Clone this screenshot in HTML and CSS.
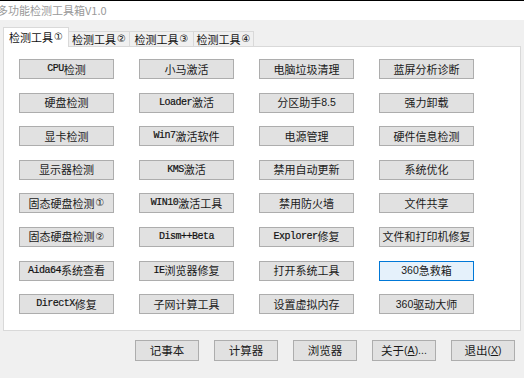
FILE: index.html
```html
<!DOCTYPE html>
<html lang="zh-CN">
<head>
<meta charset="utf-8">
<title>多功能检测工具箱V1.0</title>
<link rel="stylesheet" href="styles.css">
</head>
<body>
<div class="window">
  <div class="titlebar"><span class="title">多功能检测工具箱V1.0</span></div>
  <div class="tabs">
    <div class="tab active">检测工具<span class="c">①</span></div>
    <div class="tab t2">检测工具<span class="c">②</span></div>
    <div class="tab t3">检测工具<span class="c">③</span></div>
    <div class="tab t4">检测工具<span class="c">④</span></div>
  </div>
  <div class="panel">
    <div class="grid">
      <button class="btn"><span class="m">CPU</span>检测</button>
      <button class="btn">小马激活</button>
      <button class="btn">电脑垃圾清理</button>
      <button class="btn">蓝屏分析诊断</button>

      <button class="btn">硬盘检测</button>
      <button class="btn"><span class="m">Loader</span>激活</button>
      <button class="btn">分区助手<span class="s">8.5</span></button>
      <button class="btn">强力卸载</button>

      <button class="btn">显卡检测</button>
      <button class="btn"><span class="m">Win7</span>激活软件</button>
      <button class="btn">电源管理</button>
      <button class="btn">硬件信息检测</button>

      <button class="btn">显示器检测</button>
      <button class="btn"><span class="m">KMS</span>激活</button>
      <button class="btn">禁用自动更新</button>
      <button class="btn">系统优化</button>

      <button class="btn">固态硬盘检测<span class="c">①</span></button>
      <button class="btn"><span class="m">WIN10</span>激活工具</button>
      <button class="btn">禁用防火墙</button>
      <button class="btn">文件共享</button>

      <button class="btn">固态硬盘检测<span class="c">②</span></button>
      <button class="btn"><span class="m">Dism++Beta</span></button>
      <button class="btn"><span class="m">Explorer</span>修复</button>
      <button class="btn">文件和打印机修复</button>

      <button class="btn"><span class="m">Aida64</span>系统查看</button>
      <button class="btn"><span class="m">IE</span>浏览器修复</button>
      <button class="btn">打开系统工具</button>
      <button class="btn focus"><span class="s">360</span>急救箱</button>

      <button class="btn"><span class="m">DirectX</span>修复</button>
      <button class="btn">子网计算工具</button>
      <button class="btn">设置虚拟内存</button>
      <button class="btn"><span class="s">360</span>驱动大师</button>
    </div>
  </div>
  <div class="footer">
    <button class="btn fbtn">记事本</button>
    <button class="btn fbtn">计算器</button>
    <button class="btn fbtn">浏览器</button>
    <button class="btn fbtn">关于<span class="s">(<u>A</u>)...</span></button>
    <button class="btn fbtn">退出<span class="s">(<u>X</u>)</span></button>
  </div>
</div>
</body>
</html>
```

FILE: styles.css
```css
html, body {
  margin: 0;
  padding: 0;
}
body {
  width: 524px;
  height: 378px;
  overflow: hidden;
  background: #f0f0f0;
  font-family: "Noto Sans CJK SC", "Noto Sans", sans-serif;
  font-size: 11px;
  color: #1a1a1a;
}
.window {
  display: flex;
  flex-direction: column;
}
.titlebar {
  height: 19px;
  border-top: 1px solid #000;
  background: #fff;
  display: flex;
  align-items: center;
}
.title {
  margin-left: -3px;
  color: #9a9a9a;
  font-size: 11px;
  line-height: 1;
}
.tabs {
  display: flex;
  align-items: flex-end;
  margin: 7px 0 0 3px;
  height: 19px;
  position: relative;
  z-index: 1;
}
.tab {
  box-sizing: border-box;
  height: 15px;
  border: 1px solid #d9d9d9;
  border-bottom: none;
  background: #f0f0f0;
  display: flex;
  align-items: center;
  justify-content: center;
  font-size: 11px;
  line-height: 1;
  color: #111;
  margin-left: -1px;
}
.tab.active {
  margin-left: 0;
  height: 20px;
  width: 66px;
  background: #fff;
  margin-bottom: -1px;
  padding-bottom: 1px;
}
.t2 { width: 62px; }
.t3 { width: 65px; }
.t4 { width: 61px; }
.c {
  font-family: "DejaVu Sans", sans-serif;
  font-size: 10px;
  margin-left: 1px;
}
.panel {
  box-sizing: border-box;
  margin-left: 3px;
  width: 518px;
  height: 285px;
  background: #fff;
  border: 1px solid #d9d9d9;
  padding: 12px 0 0 15px;
}
.grid {
  display: grid;
  grid-template-columns: repeat(4, 95px);
  grid-auto-rows: 20px;
  column-gap: 25px;
  row-gap: 13.6px;
}
.btn {
  box-sizing: border-box;
  margin: 0;
  padding: 0;
  background: #e1e1e1;
  border: 1px solid #adadad;
  font-family: "Noto Sans CJK SC", "Noto Sans", sans-serif;
  font-size: 11px;
  line-height: 1;
  color: #1a1a1a;
  display: flex;
  align-items: center;
  justify-content: center;
  white-space: nowrap;
}
.btn.focus {
  background: #e5f1fb;
  border-color: #0078d7;
}
.m {
  font-family: "Liberation Mono", monospace;
  font-size: 10px;
  letter-spacing: -0.5px;
  color: #111;
  -webkit-text-stroke: 0.2px #111;
}
.s {
  font-family: "Liberation Sans", "Noto Sans", sans-serif;
  font-size: 10.5px;
}
.footer {
  display: flex;
  justify-content: flex-end;
  column-gap: 15px;
  margin-top: 9px;
  padding-right: 9px;
}
.fbtn {
  width: 64px;
  height: 21px;
  font-size: 11.5px;
}
u {
  text-decoration: underline;
}
```
